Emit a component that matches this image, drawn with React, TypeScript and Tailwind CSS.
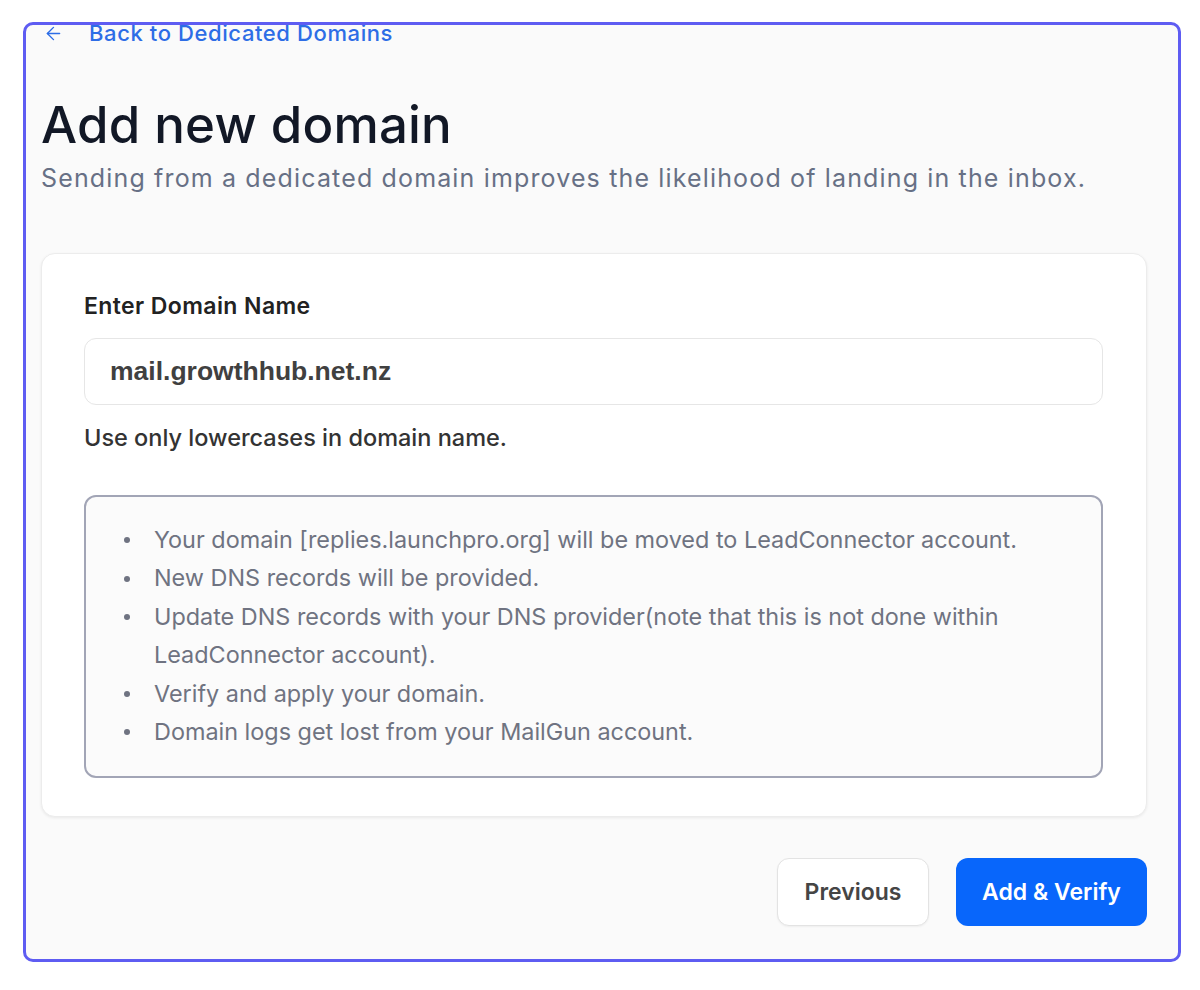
import { ArrowLeft } from 'lucide-react';

const steps = [
  'Your domain [replies.launchpro.org] will be moved to LeadConnector account.',
  'New DNS records will be provided.',
  'Update DNS records with your DNS provider(note that this is not done within LeadConnector account).',
  'Verify and apply your domain.',
  'Domain logs get lost from your MailGun account.',
];

export default function App() {
  return (
    <div className="min-h-screen bg-white pt-[22px] pl-[23px] font-['Inter',sans-serif]">
      <div className="w-[1158px] h-[940px] overflow-hidden rounded-[10px] border-[3px] border-[#5e5cf2] bg-[#fafafa] pl-[15px] pr-[31px]">
        {/* Back link, partly scrolled under the frame edge */}
        <a className="-mt-[6px] ml-[2px] flex h-[28px] items-center text-[22px] font-medium leading-[28px] tracking-[0.6px] text-[#2d6de6]">
          <ArrowLeft size={21} strokeWidth={1.6} className="mr-[25px]" />
          Back to Dedicated Domains
        </a>

        {/* Heading */}
        <h1 className="mt-[53px] text-[51px] font-medium leading-[50px] tracking-[0.2px] text-[#121826]">
          Add new domain
        </h1>
        <p className="mt-[12px] text-[25px] leading-[32px] tracking-[1.15px] text-[#677085]">
          Sending from a dedicated domain improves the likelihood of landing in the inbox.
        </p>

        {/* Card */}
        <div className="mt-[59px] w-[1106px] rounded-[14px] border border-[#ececec] bg-white pt-[38px] pb-[38px] pl-[42px] pr-[43px] shadow-[0_1px_3px_rgba(0,0,0,0.07)]">
          <label htmlFor="domain" className="block text-[23px] font-semibold leading-[28px] tracking-[0.4px] text-[#222]">
            Enter Domain Name
          </label>
          <input
            id="domain"
            type="text"
            readOnly
            value="mail.growthhub.net.nz"
            className="mt-[18px] h-[67px] w-full rounded-[12px] border border-[#e6e6e6] bg-white pl-[25px] font-['Liberation_Sans',sans-serif] text-[26.5px] font-bold text-[#404040] outline-none"
          />
          <p className="mt-[19px] text-[23.5px] font-medium leading-[28px] text-[#333]">
            Use only lowercases in domain name.
          </p>

          {/* Info box */}
          <div className="mt-[43px] rounded-[12px] border-2 border-[#a2a5b6] bg-[#fbfbfb] pt-[24px] pb-[25px] pl-[36px] pr-[40px]">
            <ul className="text-[23.4px] leading-[38.4px] text-[#6f7381]">
              {steps.map((s) => (
                <li key={s} className="grid grid-cols-[32px_1fr]">
                  <span className="flex h-[38.4px] items-center">
                    <span className="ml-[2px] h-[6px] w-[6px] rounded-full bg-[#6f7381]" />
                  </span>
                  <span>{s}</span>
                </li>
              ))}
            </ul>
          </div>
        </div>

        {/* Actions */}
        <div className="mt-[41px] flex w-[1106px] justify-end gap-[27px]">
          <button className="h-[68px] w-[152px] rounded-[12px] border border-[#e3e3e3] bg-white text-[23px] font-semibold text-[#454545] shadow-[0_1px_2px_rgba(0,0,0,0.05)]">
            Previous
          </button>
          <button className="h-[68px] w-[191px] rounded-[12px] bg-[#0866fb] text-[23px] font-semibold text-white">
            Add &amp; Verify
          </button>
        </div>
      </div>
    </div>
  );
}
